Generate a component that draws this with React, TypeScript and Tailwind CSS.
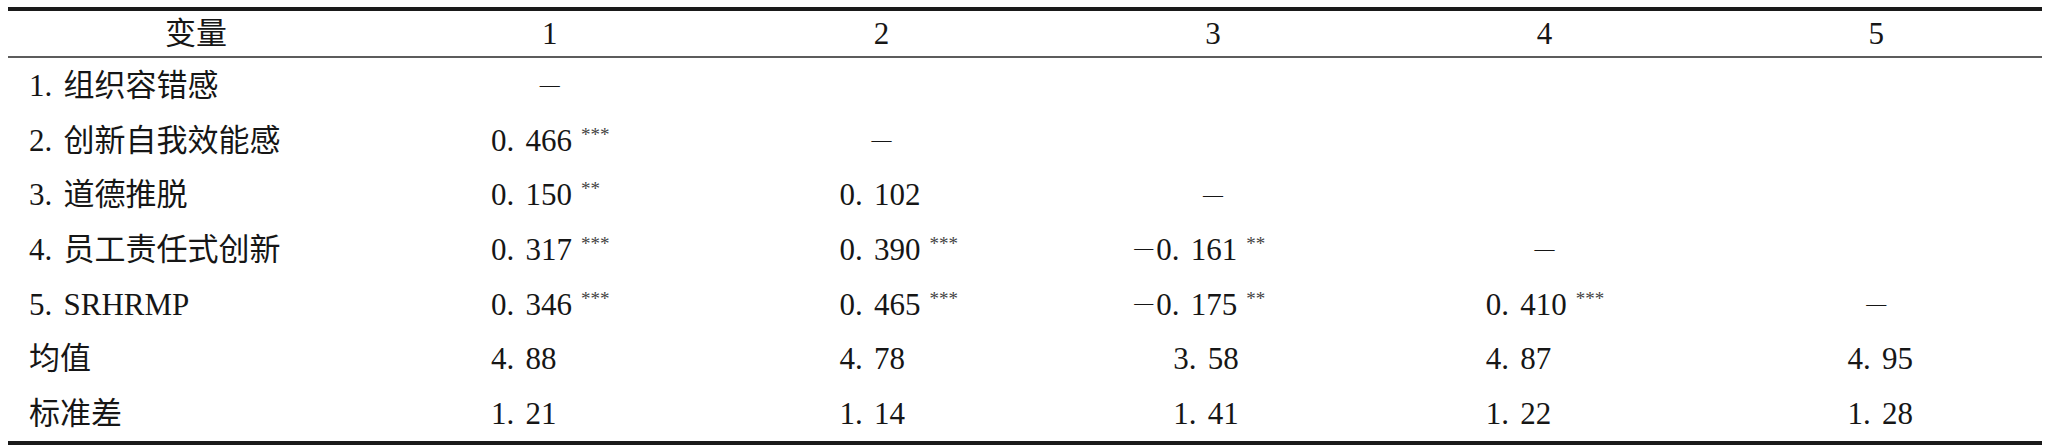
import React from "react";

type Cell = { dash?: boolean; v?: string; neg?: boolean; stars?: string } | null;

const pads = ["pl-[107px]", "pl-[124px]", "pl-[126px]", "pl-[107px]", "pl-[137px]"];

const rows: { label: string; num?: string; cells: Cell[] }[] = [
  { num: "1", label: "组织容错感", cells: [{ dash: true }, null, null, null, null] },
  { num: "2", label: "创新自我效能感", cells: [{ v: "0.466", stars: "***" }, { dash: true }, null, null, null] },
  { num: "3", label: "道德推脱", cells: [{ v: "0.150", stars: "**" }, { v: "0.102" }, { dash: true }, null, null] },
  {
    num: "4",
    label: "员工责任式创新",
    cells: [{ v: "0.317", stars: "***" }, { v: "0.390", stars: "***" }, { v: "0.161", neg: true, stars: "**" }, { dash: true }, null],
  },
  {
    num: "5",
    label: "SRHRMP",
    cells: [
      { v: "0.346", stars: "***" },
      { v: "0.465", stars: "***" },
      { v: "0.175", neg: true, stars: "**" },
      { v: "0.410", stars: "***" },
      { dash: true },
    ],
  },
  { label: "均值", cells: [{ v: "4.88" }, { v: "4.78" }, { v: "3.58" }, { v: "4.87" }, { v: "4.95" }] },
  { label: "标准差", cells: [{ v: "1.21" }, { v: "1.14" }, { v: "1.41" }, { v: "1.22" }, { v: "1.28" }] },
];

function Num({ v }: { v: string }) {
  const [a, b] = v.split(".");
  return (
    <span>
      {a}
      <span className="inline-block w-[19px]">.</span>
      {b}
    </span>
  );
}

function ValueCell({ cell, col }: { cell: Cell; col: number }) {
  if (!cell) return <div />;
  if (cell.dash) {
    return (
      <div className="flex items-center justify-center">
        <span className="text-[20px] align-[8px]">—</span>
      </div>
    );
  }
  return (
    <div className={`flex items-center ${pads[col]}`}>
      <span className={`whitespace-nowrap ${cell.neg ? "-ml-[39px]" : ""}`}>
        {cell.neg && <span className="inline-block w-[22px] text-[19px] align-[6px]">—</span>}
        <Num v={cell.v!} />
        {cell.stars && <span className="ml-[9px] text-[19px] text-[#444] align-[10px]">{cell.stars}</span>}
      </span>
    </div>
  );
}

export default function App() {
  return (
    <div className="w-[2048px] h-[448px] bg-white pt-[7px] pl-[8px] text-[#161616] text-[31px] leading-none font-['Liberation_Serif','Noto_Sans_CJK_SC',serif]">
      <div className="w-[2034px] border-t-[4px] border-b-[4px] border-[#1a1a1a]">
        <div className="grid grid-cols-[376px_repeat(5,331.6px)] h-[47px] items-center border-b-[2px] border-[#5c5c5c]">
          <div className="text-center">变量</div>
          {["1", "2", "3", "4", "5"].map((h) => (
            <div key={h} className="text-center">
              {h}
            </div>
          ))}
        </div>
        {rows.map((r) => (
          <div key={r.label} className="grid grid-cols-[376px_repeat(5,331.6px)] h-[54.7px]">
            <div className="flex items-center pl-[21px] whitespace-nowrap">
              {r.num && <Num v={r.num + "."} />}
              {r.label}
            </div>
            {r.cells.map((c, i) => (
              <ValueCell key={i} cell={c} col={i} />
            ))}
          </div>
        ))}
      </div>
    </div>
  );
}
